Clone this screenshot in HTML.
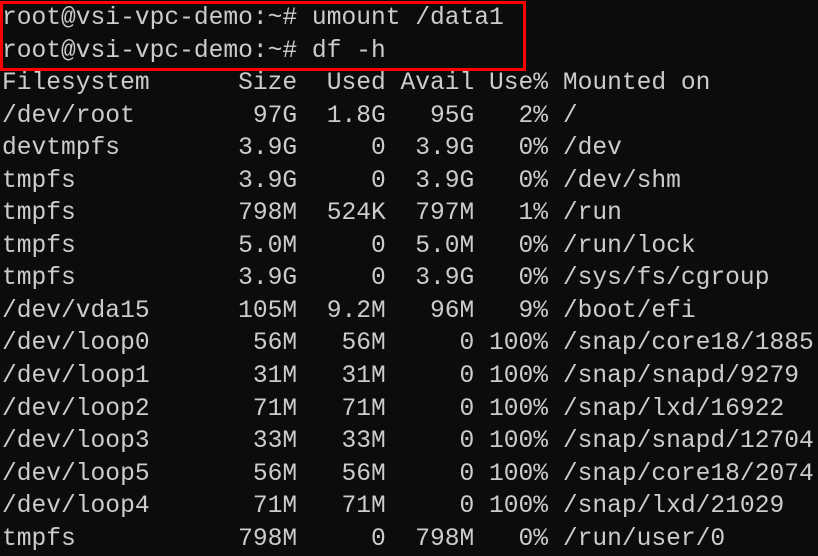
<!DOCTYPE html>
<html><head><meta charset="utf-8"><style>
html,body{margin:0;padding:0;background:#0c0c0c;width:818px;height:556px;overflow:hidden}
pre{margin:0;position:absolute;left:2px;top:3px;font-family:"Liberation Mono",monospace;font-size:24.6px;line-height:32.55px;color:#cccccc;letter-spacing:0}
.box{position:absolute;left:0;top:1px;width:520px;height:64px;border:3px solid #ff0000}
</style></head><body>
<pre>root@vsi-vpc-demo:~# umount /data1
root@vsi-vpc-demo:~# df -h
Filesystem      Size  Used Avail Use% Mounted on
/dev/root        97G  1.8G   95G   2% /
devtmpfs        3.9G     0  3.9G   0% /dev
tmpfs           3.9G     0  3.9G   0% /dev/shm
tmpfs           798M  524K  797M   1% /run
tmpfs           5.0M     0  5.0M   0% /run/lock
tmpfs           3.9G     0  3.9G   0% /sys/fs/cgroup
/dev/vda15      105M  9.2M   96M   9% /boot/efi
/dev/loop0       56M   56M     0 100% /snap/core18/1885
/dev/loop1       31M   31M     0 100% /snap/snapd/9279
/dev/loop2       71M   71M     0 100% /snap/lxd/16922
/dev/loop3       33M   33M     0 100% /snap/snapd/12704
/dev/loop5       56M   56M     0 100% /snap/core18/2074
/dev/loop4       71M   71M     0 100% /snap/lxd/21029
tmpfs           798M     0  798M   0% /run/user/0</pre>
<div class="box"></div>
</body></html>
